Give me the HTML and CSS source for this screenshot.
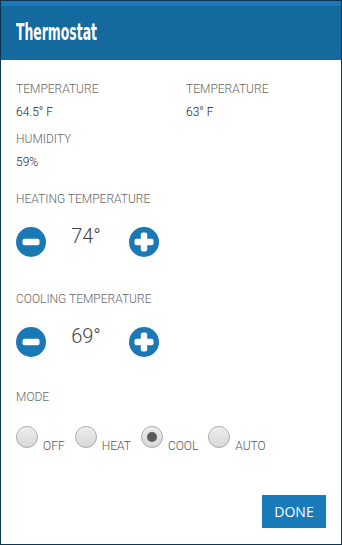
FILE: index.html
```html
<!DOCTYPE html>
<html>
<head>
<meta charset="utf-8">
<link rel="stylesheet" href="styles.css">
</head>
<body>
<div class="dialog">
  <div class="header"><h1 class="title"><span>Thermostat</span></h1></div>
  <div class="content">
    <div class="readings">
      <div class="reading"><div class="label">TEMPERATURE</div><div class="value">64.5° F</div></div>
      <div class="reading"><div class="label">TEMPERATURE</div><div class="value">63° F</div></div>
      <div class="reading"><div class="label">HUMIDITY</div><div class="value">59%</div></div>
    </div>

    <div class="section heating">
      <div class="label">HEATING TEMPERATURE</div>
      <div class="stepper">
        <svg class="btn" viewBox="0 0 30 30" width="30" height="30"><circle cx="15" cy="15" r="15" fill="#1a79b5"/><rect x="6.5" y="11.8" width="17" height="6.4" rx="2" fill="#fff"/></svg>
        <div class="setpoint">74°</div>
        <svg class="btn" viewBox="0 0 30 30" width="30" height="30"><circle cx="15" cy="15" r="15" fill="#1a79b5"/><rect x="5.5" y="11.8" width="19" height="6.4" rx="2" fill="#fff"/><rect x="11.8" y="5.5" width="6.4" height="19" rx="2" fill="#fff"/></svg>
      </div>
    </div>

    <div class="section cooling">
      <div class="label">COOLING TEMPERATURE</div>
      <div class="stepper">
        <svg class="btn" viewBox="0 0 30 30" width="30" height="30"><circle cx="15" cy="15" r="15" fill="#1a79b5"/><rect x="6.5" y="11.8" width="17" height="6.4" rx="2" fill="#fff"/></svg>
        <div class="setpoint">69°</div>
        <svg class="btn" viewBox="0 0 30 30" width="30" height="30"><circle cx="15" cy="15" r="15" fill="#1a79b5"/><rect x="5.5" y="11.8" width="19" height="6.4" rx="2" fill="#fff"/><rect x="11.8" y="5.5" width="6.4" height="19" rx="2" fill="#fff"/></svg>
      </div>
    </div>

    <div class="section mode">
      <div class="label">MODE</div>
      <div class="radios">
        <div class="opt"><span class="radio"></span><span class="opt-label">OFF</span></div>
        <div class="opt"><span class="radio"></span><span class="opt-label">HEAT</span></div>
        <div class="opt"><span class="radio checked"></span><span class="opt-label">COOL</span></div>
        <div class="opt"><span class="radio"></span><span class="opt-label">AUTO</span></div>
      </div>
    </div>

    <div class="footer"><button class="done">DONE</button></div>
  </div>
</div>
</body>
</html>
```
FILE: styles.css
```css
* { box-sizing: border-box; }
html, body { margin: 0; padding: 0; background: #0c3552; }
body { font-family: Roboto, "Liberation Sans", sans-serif; }

.dialog {
  width: 342px;
  height: 545px;
  background: #fff;
  border: 1px solid #0c3552;
  display: flex;
  flex-direction: column;
}

.header {
  height: 59px;
  background: #14699f;
  border-top: 5px solid #1b7bba;
  display: flex;
  align-items: flex-start;
  padding-left: 15px;
}
.title {
  margin: 0;
  padding-top: 13px;
  font-family: "DejaVu Sans Condensed", sans-serif;
  font-weight: bold;
  font-size: 23px;
  line-height: 26px;
  color: #fff;
}
.title span {
  display: inline-block;
  transform: scaleX(0.6);
  transform-origin: left center;
}

.content {
  flex: 1;
  padding: 22px 15px 0 15px;
  display: flex;
  flex-direction: column;
}

.label {
  font-size: 12px;
  line-height: 14px;
  color: #666;
  font-weight: 300;
}
.value {
  font-size: 12px;
  line-height: 14px;
  color: #222;
  font-weight: 300;
  margin-top: 9px;
}

.readings {
  display: grid;
  grid-template-columns: 170px 1fr;
  row-gap: 13px;
}

.section { display: flex; flex-direction: column; }
.heating { margin-top: 23px; }
.cooling { margin-top: 35px; }
.mode { margin-top: 33px; }

.stepper {
  display: flex;
  align-items: flex-start;
  margin-top: 21px;
  height: 30px;
}
.btn { display: block; flex: none; }
.setpoint {
  width: 83px;
  text-align: center;
  font-size: 20px;
  line-height: 18px;
  font-weight: 300;
  color: #444;
  padding-right: 3px;
}

.radios {
  display: flex;
  align-items: flex-end;
  margin-top: 22px;
  height: 22px;
}
.opt {
  display: flex;
  align-items: flex-end;
  margin-right: 10px;
}
.radio {
  width: 22px;
  height: 22px;
  border-radius: 50%;
  border: 1px solid #a8a8a8;
  background: linear-gradient(#ececec, #d8d8d8);
  box-shadow: inset 0 1px 1px rgba(255,255,255,0.7);
  position: relative;
  flex: none;
}
.radio.checked::after {
  content: "";
  position: absolute;
  left: 5px; top: 5px;
  width: 10px; height: 10px;
  border-radius: 50%;
  background: #5a5a5a;
}
.opt-label {
  font-size: 12px;
  line-height: 14px;
  color: #555;
  font-weight: 300;
  margin-left: 5px;
  margin-bottom: -5px;
}

.footer {
  margin-top: 47px;
  display: flex;
  justify-content: flex-end;
}
.done {
  width: 64px;
  height: 33px;
  border: none;
  background: #1a7bbb;
  color: #fff;
  font-family: "Open Sans", Roboto, sans-serif;
  font-size: 14px;
  padding: 0;
}
```
